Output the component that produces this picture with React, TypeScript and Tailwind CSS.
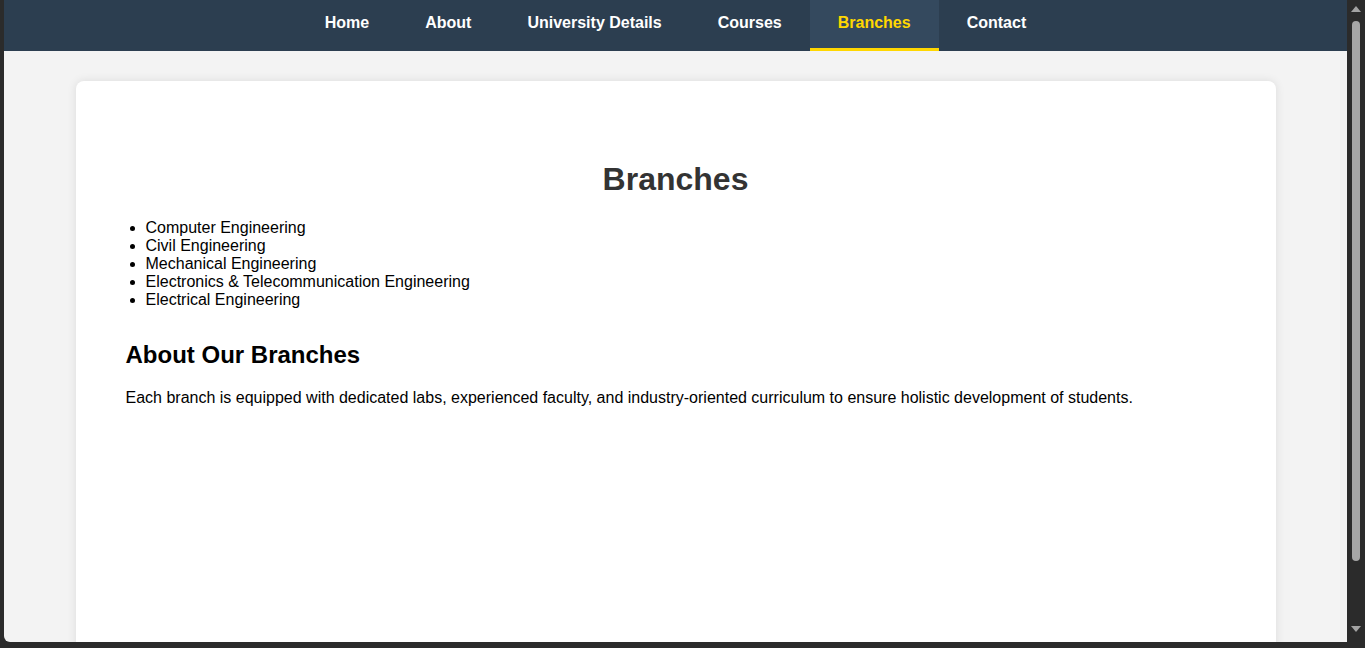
const links = ["Home", "About", "University Details", "Courses", "Branches", "Contact"];

const branches = [
  "Computer Engineering",
  "Civil Engineering",
  "Mechanical Engineering",
  "Electronics & Telecommunication Engineering",
  "Electrical Engineering",
];

function Navbar({ active }: { active: string }) {
  return (
    <nav className="flex h-[51px] shrink-0 justify-center bg-[#2c3e50]">
      {links.map((link) => (
        <a
          key={link}
          href="#"
          className={`flex items-center border-b-[3px] px-7 pb-[2px] text-base font-bold ${
            link === active
              ? "border-[#ffd700] bg-[#34495e] text-[#ffd700]"
              : "border-transparent text-white"
          }`}
        >
          {link}
        </a>
      ))}
    </nav>
  );
}

function Scrollbar() {
  return (
    <div className="flex w-[18px] shrink-0 flex-col items-center bg-[#2b2b2b] pr-[1px]">
      <div className="mt-[6px] h-0 w-0 border-x-[5px] border-b-[6px] border-x-transparent border-b-[#a3a3a3]" />
      <div className="mt-[9px] h-[540px] w-[8px] rounded-full bg-[#a6a6a6]" />
      <div className="mt-auto mb-[10px] h-0 w-0 border-x-[5px] border-t-[6px] border-x-transparent border-t-[#a3a3a3]" />
    </div>
  );
}

export default function App() {
  return (
    <div className="flex h-[648px] w-[1365px] flex-col overflow-hidden bg-[#2b2b2b] font-['Liberation_Sans',Arial,sans-serif]">
      <div className="flex min-h-0 flex-1">
        <div className="w-1 shrink-0" />
        <div className="flex min-w-0 flex-1 flex-col overflow-hidden rounded-bl-[6px] bg-[#f3f3f3]">
          <Navbar active="Branches" />
          <main className="flex-1">
            <div className="mx-auto mt-[30px] h-[600px] w-[1200px] rounded-lg bg-white px-[50px] pt-[80px] shadow-[0_0_10px_rgba(0,0,0,0.1)]">
              <h1 className="text-center text-[32px] leading-[37px] font-bold text-[#333]">Branches</h1>
              <ul className="mt-[21px] list-disc pl-5 text-base leading-[18px] text-black">
                {branches.map((b) => (
                  <li key={b}>{b}</li>
                ))}
              </ul>
              <h2 className="mt-[32px] text-2xl leading-[28px] font-bold text-black">About Our Branches</h2>
              <p className="mt-[20px] text-base leading-[18px] text-black">
                Each branch is equipped with dedicated labs, experienced faculty, and industry-oriented curriculum to ensure holistic development of students.
              </p>
            </div>
          </main>
        </div>
        <Scrollbar />
      </div>
      <div className="h-[6px] shrink-0" />
    </div>
  );
}
